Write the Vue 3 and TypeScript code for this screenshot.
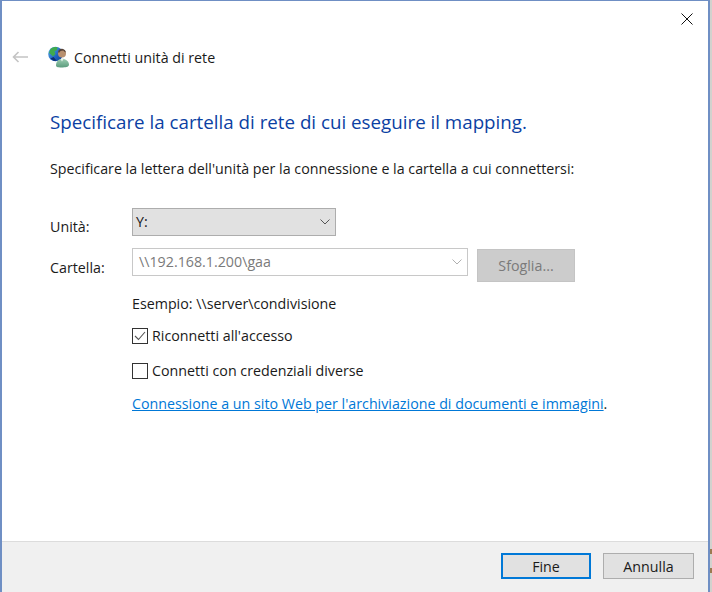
<script setup lang="ts">
const title = 'Connetti unità di rete'
</script>

<template>
  <div class="screen">
    <div class="window">
      <div class="content">
        <button class="close" aria-label="Chiudi">
          <svg width="12" height="12" viewBox="0 0 12 12"><path d="M.5.5l11 11M11.5.5l-11 11" stroke="#111" stroke-width="1" fill="none" /></svg>
        </button>
        <div class="nav">
          <svg class="back" width="16" height="12" viewBox="0 0 16 12"><path d="M6.500 1L1.500 6l5 5M1.500 6H16" stroke="#c4c4c4" stroke-width="1.600" fill="none" /></svg>
          <svg class="net" width="22" height="22" viewBox="0 0 22 22">
            <defs>
              <linearGradient id="globe" x1="0" y1="0" x2="1" y2="1">
                <stop offset="0" stop-color="#5fb4f0" />
                <stop offset="0.6" stop-color="#1f62c0" />
                <stop offset="1" stop-color="#123f8f" />
              </linearGradient>
              <linearGradient id="body" x1="0" y1="0" x2="0" y2="1">
                <stop offset="0" stop-color="#9ccdb2" />
                <stop offset="1" stop-color="#5b9c7d" />
              </linearGradient>
            </defs>
            <circle cx="7.500" cy="8" r="7.300" fill="url(#globe)" />
            <path d="M2.500 3C4.500 1.300 7 .8 9.500 1.200L9 4 6.500 5.500 7.500 8 5 10.500 3 8.500 1 7z" fill="#3faa4e" />
            <path d="M2.500 12.500l3-1.500 3 3.500-2.500.5z" fill="#0d2f73" />
            <circle cx="14" cy="7.500" r="4" fill="#b89070" />
            <path d="M10 6.500C10 4 12 2.600 14.200 2.800c2 .2 3.500 1.700 3.600 3.700l-1.300-.8-1.200-1.200-2.800.4-1 1.600z" fill="#54433a" />
            <path d="M8 19.500c0-3.700 2.500-6.700 6-6.700s7 2.600 7 5.800c0 2.100-2 2.900-6.200 2.900-4 0-6.800-.1-6.800-2z" fill="url(#body)" />
            <path d="M12.500 13l1.500 2.500 1.500-2.500z" fill="#e8f2ec" />
          </svg>
          <span class="nav-title">{{ title }}</span>
        </div>
        <h1 class="heading">Specificare la cartella di rete di cui eseguire il mapping.</h1>
        <p class="intro">Specificare la lettera dell'unità per la connessione e la cartella a cui connettersi:</p>
        <div class="form">
          <label class="lbl lbl-drive">Unità:</label>
          <div class="drive">
            <span>Y:</span>
            <svg width="10" height="6" viewBox="0 0 10 6"><path d="M.5.500l4.500 4.500 4.500-4.500" stroke="#555" fill="none" /></svg>
          </div>
          <label class="lbl lbl-folder">Cartella:</label>
          <div class="folder-row">
            <div class="folder">
              <span>\\192.168.1.200\gaa</span>
              <svg width="10" height="6" viewBox="0 0 10 6"><path d="M.5.500l4.500 4.500 4.500-4.500" stroke="#b0b0b0" fill="none" /></svg>
            </div>
            <div class="browse">Sfoglia...</div>
          </div>
        </div>
        <div class="options">
          <div class="example">Esempio: \\server\condivisione</div>
          <div class="check check-1">
            <span class="box"><svg width="12" height="10" viewBox="0 0 12 10"><path d="M1 5l3.500 3.500L11 1" stroke="#555" stroke-width="1.100" fill="none" /></svg></span>
            <span>Riconnetti all'accesso</span>
          </div>
          <div class="check check-2">
            <span class="box"></span>
            <span>Connetti con credenziali diverse</span>
          </div>
          <div class="link-row"><a class="link">Connessione a un sito Web per l'archiviazione di documenti e immagini</a>.</div>
        </div>
      </div>
      <div class="footer">
        <div class="btn primary">Fine</div>
        <div class="btn">Annulla</div>
      </div>
    </div>
    <div class="strip">
      <i class="mark mark-1"></i>
      <i class="mark mark-2"></i>
    </div>
  </div>
</template>

<style>
html, body { margin: 0; background: #fff; }
</style>

<style scoped>
.screen {
  display: flex;
  width: 712px;
  height: 592px;
  overflow: hidden;
}
.window {
  width: 710px;
  height: 592px;
  box-sizing: border-box;
  border-top: 1px solid #6f8fc4;
  border-left: 2px solid #6f8fc4;
  border-right: 2px solid #6f8fc4;
  display: flex;
  flex-direction: column;
  font-family: "Open Sans", "Noto Sans", sans-serif;
  font-size: 14.25px;
  color: #1a1a1a;
  background: #fff;
}
.strip {
  position: relative;
  width: 2px;
  height: 592px;
  background: #d2d2ce;
}
.mark {
  position: absolute;
  left: 0;
  width: 2px;
  height: 5px;
  background: #9a7a50;
}
.mark-1 { top: 549px; }
.mark-2 { top: 568px; }
.content {
  position: relative;
  flex: 1;
  padding-left: 48px;
}
.close {
  position: absolute;
  top: 12px;
  right: 15px;
  width: 12px;
  height: 12px;
  padding: 0;
  border: 0;
  background: none;
  display: block;
}
.close svg { display: block; }
.nav {
  display: flex;
  align-items: center;
  height: 22px;
  margin-top: 45px;
  margin-left: -38px;
}
.back { margin-right: 20px; }
.net { margin-right: 4px; }
.heading {
  margin: 40px 0 0;
  font-size: 18.75px;
  font-weight: 400;
  line-height: 27px;
  color: #0b3fa3;
}
.intro { margin: 24px 0 0; line-height: 20px; }
.form {
  display: grid;
  grid-template-columns: 82px auto;
  row-gap: 11px;
  margin-top: 29px;
}
.lbl { line-height: 20px; }
.lbl-drive { padding-top: 9px; }
.lbl-folder { padding-top: 10px; }
.drive {
  width: 204px;
  height: 28px;
  box-sizing: border-box;
  border: 1px solid #adadad;
  background: #e1e1e1;
  display: flex;
  align-items: center;
  justify-content: space-between;
  padding: 0 5px 0 3px;
}
.drive span { margin-top: -1px; }
.folder-row { display: flex; align-items: flex-start; gap: 9px; }
.folder {
  width: 336px;
  height: 28px;
  box-sizing: border-box;
  border: 1px solid #c8c8c8;
  display: flex;
  align-items: center;
  justify-content: space-between;
  padding: 0 5px 0 6px;
  color: #7a7a7a;
}
.folder span { margin-top: -1px; }
.browse {
  width: 98px;
  height: 33px;
  margin-top: 1px;
  display: flex;
  align-items: center;
  justify-content: center;
  background: #cccccc;
  color: #7a7a7a;
  box-sizing: border-box;
  border: 1px solid #c4c4c4;
}
.options { margin-left: 82px; }
.example { margin-top: 12px; line-height: 20px; }
.check { display: flex; align-items: center; gap: 4px; line-height: 20px; }
.check-1 { margin-top: 12px; }
.check-2 { margin-top: 15px; }
.box {
  width: 16px;
  height: 16px;
  box-sizing: border-box;
  border: 1px solid #333;
  display: flex;
  align-items: center;
  justify-content: center;
  background: #fff;
}
.link-row { margin-top: 13px; line-height: 20px; }
.link { color: #0078d7; text-decoration: underline; }
.footer {
  height: 51px;
  box-sizing: border-box;
  border-top: 1px solid #dcdcdc;
  background: #f0f0f0;
  display: flex;
  justify-content: flex-end;
  align-items: flex-start;
  gap: 12px;
  padding: 11px 14px 0 0;
}
.btn {
  width: 91px;
  height: 26px;
  box-sizing: border-box;
  border: 1px solid #adadad;
  background: #e1e1e1;
  display: flex;
  align-items: center;
  justify-content: center;
}
.primary { width: 90px; border: 2px solid #0078d7; }
</style>
